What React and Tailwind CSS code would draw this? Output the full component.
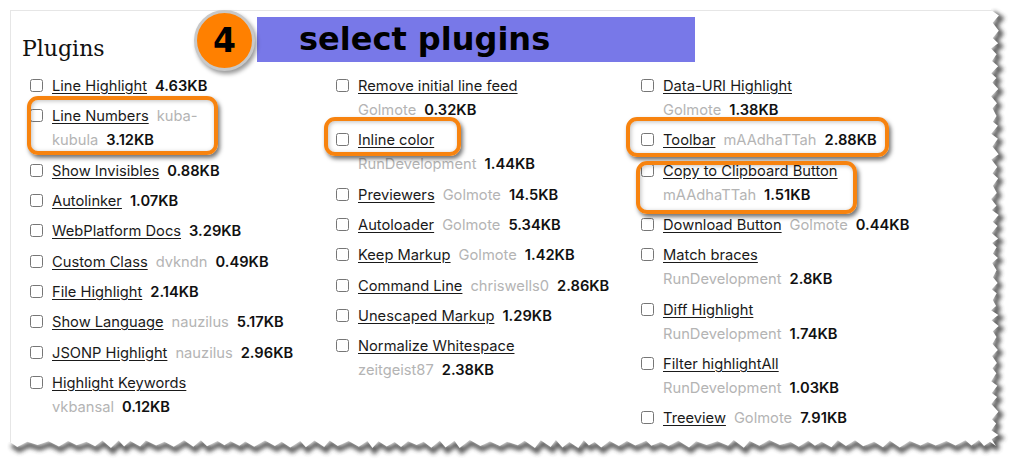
const columns = [
  [
    { name: "Line Highlight", size: "4.63KB" },
    { name: "Line Numbers", author: ["kuba-", "kubula"], size: "3.12KB" },
    { name: "Show Invisibles", size: "0.88KB" },
    { name: "Autolinker", size: "1.07KB" },
    { name: "WebPlatform Docs", size: "3.29KB" },
    { name: "Custom Class", author: "dvkndn", size: "0.49KB" },
    { name: "File Highlight", size: "2.14KB" },
    { name: "Show Language", author: "nauzilus", size: "5.17KB" },
    { name: "JSONP Highlight", author: "nauzilus", size: "2.96KB" },
    { name: "Highlight Keywords", author: "vkbansal", size: "0.12KB", wrap: true },
  ],
  [
    { name: "Remove initial line feed", author: "Golmote", size: "0.32KB", wrap: true },
    { name: "Inline color", author: "RunDevelopment", size: "1.44KB", wrap: true },
    { name: "Previewers", author: "Golmote", size: "14.5KB" },
    { name: "Autoloader", author: "Golmote", size: "5.34KB" },
    { name: "Keep Markup", author: "Golmote", size: "1.42KB" },
    { name: "Command Line", author: "chriswells0", size: "2.86KB" },
    { name: "Unescaped Markup", size: "1.29KB" },
    { name: "Normalize Whitespace", author: "zeitgeist87", size: "2.38KB", wrap: true },
  ],
  [
    { name: "Data-URI Highlight", author: "Golmote", size: "1.38KB", wrap: true },
    { name: "Toolbar", author: "mAAdhaTTah", size: "2.88KB" },
    { name: "Copy to Clipboard Button", author: "mAAdhaTTah", size: "1.51KB", wrap: true },
    { name: "Download Button", author: "Golmote", size: "0.44KB" },
    { name: "Match braces", author: "RunDevelopment", size: "2.8KB", wrap: true },
    { name: "Diff Highlight", author: "RunDevelopment", size: "1.74KB", wrap: true },
    { name: "Filter highlightAll", author: "RunDevelopment", size: "1.03KB", wrap: true },
    { name: "Treeview", author: "Golmote", size: "7.91KB" },
  ],
];

function PluginItem({ name, author, size, wrap }) {
  let meta;
  if (Array.isArray(author)) {
    meta = (
      <>
        <span className="ml-2 text-[#b4b4b4]">{author[0]}</span>
        <br />
        <span className="text-[#b4b4b4]">{author[1]}</span>
        <span className="ml-2 font-semibold text-[#111]">{size}</span>
      </>
    );
  } else if (wrap) {
    meta = (
      <>
        <br />
        <span className="text-[#b4b4b4]">{author}</span>
        <span className="ml-2 font-semibold text-[#111]">{size}</span>
      </>
    );
  } else {
    meta = (
      <>
        {author && <span className="ml-2 text-[#b4b4b4]">{author}</span>}
        <span className="ml-2 font-semibold text-[#111]">{size}</span>
      </>
    );
  }

  return (
    <label className="flex items-start gap-[9px]">
      <input type="checkbox" className="m-0 mt-[5px] h-[13px] w-[13px] shrink-0" />
      <div className="text-[14.7px] leading-6 whitespace-nowrap">
        <a href="#" className="text-[#1a1a1a] underline underline-offset-2">
          {name}
        </a>
        {meta}
      </div>
    </label>
  );
}

// deterministic jagged edge for the torn paper look
function rand(seed) {
  let s = seed;
  return () => {
    s = (s * 16807) % 2147483647;
    return (s - 1) / 2147483646;
  };
}

function TornEdge() {
  const r = rand(41);
  const pts = [];
  let y = 10;
  let i = 0;
  while (y < 444) {
    pts.push([991 + (i % 2 ? 5 + r() * 3 : r() * 2), y]);
    y += 4 + r() * 4;
    i++;
  }
  pts.push([996, 446]);
  let x = 990;
  i = 0;
  while (x > 10) {
    pts.push([x, 440 + (i % 2 ? 5 + r() * 3 : r() * 2)]);
    x -= 5 + r() * 6;
    i++;
  }
  pts.push([10, 442]);

  const line = pts.map((p) => p.join(",")).join(" ");
  const outside = `1015,0 ${pts[0][0]},0 ${line} 0,442 0,465 1015,465`;

  return (
    <svg className="pointer-events-none absolute inset-0" width="1015" height="465">
      <defs>
        <clipPath id="out">
          <polygon points={outside} />
        </clipPath>
        <filter id="blur" x="-5%" y="-5%" width="110%" height="110%">
          <feGaussianBlur stdDeviation="2.2" />
        </filter>
      </defs>
      <polygon points={outside} fill="#fff" />
      <g clipPath="url(#out)">
        <polyline
          points={line}
          transform="translate(2,3)"
          fill="none"
          stroke="#3a3a3a"
          strokeWidth="5"
          filter="url(#blur)"
          opacity="0.85"
        />
      </g>
    </svg>
  );
}

const box =
  "absolute rounded-[11px] border-[4px] border-[#f7830f] shadow-[2px_3px_4px_rgba(0,0,0,0.55),inset_1px_1px_4px_rgba(0,0,0,0.25)]";

export default function App() {
  return (
    <div className="relative h-[465px] w-[1015px] overflow-hidden bg-white font-['Inter',sans-serif] text-[#111]">
      <div className="ml-[10px] mt-[10px] h-[440px] w-[990px] border-l border-t border-[#e6e6e6] pl-[11px] pt-[24px]">
        <h2 className="font-['DejaVu_Serif',serif] text-[22px] leading-[28px] text-[#111]">
          Plugins
        </h2>
        <div className="mt-[11px] grid grid-cols-[306px_305px_305px] pl-[8px]">
          {columns.map((col, ci) => (
            <div key={ci} className="flex flex-col gap-[6.35px]">
              {col.map((p) => (
                <PluginItem key={p.name} {...p} />
              ))}
            </div>
          ))}
        </div>
      </div>

      {/* step annotation */}
      <div className="absolute left-[257px] top-[17px] h-[45px] w-[438px] bg-[#7878e8] pl-[42px] font-['DejaVu_Sans',sans-serif] text-[32px] font-bold leading-[45px] text-black">
        select plugins
      </div>
      <div className="absolute left-[194px] top-[10px] flex h-[61px] w-[61px] items-center justify-center rounded-full border-[3px] border-[#c8c8c8] bg-[#ff8000] font-['DejaVu_Sans',sans-serif] text-[33px] font-bold leading-[55px] text-black shadow-[2px_3px_4px_rgba(0,0,0,0.4)]">
        4
      </div>

      {/* highlight boxes */}
      <div className={`${box} left-[27px] top-[96px] h-[59px] w-[191px]`} />
      <div className={`${box} left-[324px] top-[117px] h-[39px] w-[137px]`} />
      <div className={`${box} left-[626px] top-[117px] h-[40px] w-[263px]`} />
      <div className={`${box} left-[636px] top-[161px] h-[53px] w-[221px]`} />

      <TornEdge />
    </div>
  );
}
